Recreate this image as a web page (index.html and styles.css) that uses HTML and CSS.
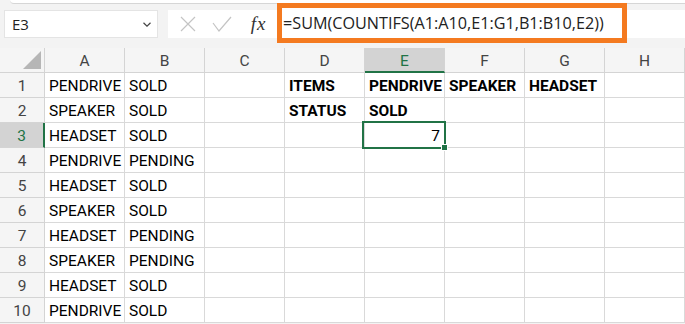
FILE: index.html
```html
<!DOCTYPE html>
<html lang="en">
<head>
  <meta charset="UTF-8" />
  <title>COUNTIFS with SUM</title>
  <link rel="stylesheet" href="styles.css">
</head>
<body>
  <div class="ribbon-edge"></div>
  <div class="formula-row">
    <div class="name-box">
      <span>E3</span>
      <svg class="chev" width="8" height="5" viewBox="0 0 8 5"><path d="M0.5 0.8 L4 4.2 L7.5 0.8" fill="none" stroke="#444" stroke-width="1.2"/></svg>
    </div>
    <div class="formula-bar">
      <span class="fb-btn slot-x">
        <svg width="16" height="16" viewBox="0 0 16 16"><path d="M1 1 L15 15 M15 1 L1 15" stroke="#c4c4c4" stroke-width="1.2" fill="none"/></svg>
      </span>
      <span class="fb-btn slot-ok">
        <svg width="20" height="16" viewBox="0 0 20 16"><path d="M1 7 L7 15 L19 1" stroke="#c4c4c4" stroke-width="1.2" fill="none"/></svg>
      </span>
      <span class="fb-btn slot-fx"><i class="fx">fx</i></span>
      <div class="formula-input">=SUM(COUNTIFS(A1:A10,E1:G1,B1:B10,E2))</div>
    </div>
  </div>

  <div class="sheet">
    <!-- column headers -->
    <div class="cell hdr corner"><div class="tri"></div></div>
    <div class="cell hdr">A</div>
    <div class="cell hdr">B</div>
    <div class="cell hdr">C</div>
    <div class="cell hdr">D</div>
    <div class="cell hdr sel-col">E</div>
    <div class="cell hdr">F</div>
    <div class="cell hdr">G</div>
    <div class="cell hdr">H</div>

    <div class="cell rowhdr">1</div>
    <div class="cell">PENDRIVE</div><div class="cell">SOLD</div><div class="cell"></div>
    <div class="cell bold">ITEMS</div><div class="cell bold">PENDRIVE</div><div class="cell bold">SPEAKER</div><div class="cell bold">HEADSET</div><div class="cell"></div>

    <div class="cell rowhdr">2</div>
    <div class="cell">SPEAKER</div><div class="cell">SOLD</div><div class="cell"></div>
    <div class="cell bold">STATUS</div><div class="cell bold">SOLD</div><div class="cell"></div><div class="cell"></div><div class="cell"></div>

    <div class="cell rowhdr sel-row">3</div>
    <div class="cell">HEADSET</div><div class="cell">SOLD</div><div class="cell"></div>
    <div class="cell"></div><div class="cell num active">7</div><div class="cell"></div><div class="cell"></div><div class="cell"></div>

    <div class="cell rowhdr">4</div>
    <div class="cell">PENDRIVE</div><div class="cell">PENDING</div><div class="cell"></div>
    <div class="cell"></div><div class="cell"></div><div class="cell"></div><div class="cell"></div><div class="cell"></div>

    <div class="cell rowhdr">5</div>
    <div class="cell">HEADSET</div><div class="cell">SOLD</div><div class="cell"></div>
    <div class="cell"></div><div class="cell"></div><div class="cell"></div><div class="cell"></div><div class="cell"></div>

    <div class="cell rowhdr">6</div>
    <div class="cell">SPEAKER</div><div class="cell">SOLD</div><div class="cell"></div>
    <div class="cell"></div><div class="cell"></div><div class="cell"></div><div class="cell"></div><div class="cell"></div>

    <div class="cell rowhdr">7</div>
    <div class="cell">HEADSET</div><div class="cell">PENDING</div><div class="cell"></div>
    <div class="cell"></div><div class="cell"></div><div class="cell"></div><div class="cell"></div><div class="cell"></div>

    <div class="cell rowhdr">8</div>
    <div class="cell">SPEAKER</div><div class="cell">PENDING</div><div class="cell"></div>
    <div class="cell"></div><div class="cell"></div><div class="cell"></div><div class="cell"></div><div class="cell"></div>

    <div class="cell rowhdr">9</div>
    <div class="cell">HEADSET</div><div class="cell">SOLD</div><div class="cell"></div>
    <div class="cell"></div><div class="cell"></div><div class="cell"></div><div class="cell"></div><div class="cell"></div>

    <div class="cell rowhdr">10</div>
    <div class="cell">PENDRIVE</div><div class="cell">SOLD</div><div class="cell"></div>
    <div class="cell"></div><div class="cell"></div><div class="cell"></div><div class="cell"></div><div class="cell"></div>
  </div>
</body>
</html>
```

FILE: styles.css
```css
html, body {
  margin: 0;
  height: 100%;
  overflow: hidden;
}
body {
  background: #f3f3f3;
  font-family: Roboto, "Liberation Sans", sans-serif;
  color: #000;
}

/* top strip of the ribbon */
.ribbon-edge {
  height: 3px;
  margin-left: 10px;
  background: #fff;
  border-bottom: 1px solid #d6d6d6;
  border-bottom-left-radius: 6px;
}

.formula-row {
  height: 44px;
  box-sizing: border-box;
  padding-top: 6px;
  display: flex;
  align-items: flex-start;
}
.name-box {
  margin-left: 4px;
  width: 154px;
  height: 28px;
  box-sizing: border-box;
  background: #fff;
  border: 1px solid #e4e4e4;
  display: flex;
  align-items: center;
  justify-content: space-between;
  padding: 0 6px 0 7px;
  font-family: "Open Sans", "Noto Sans", sans-serif;
  font-size: 15px;
  color: #222;
}
.name-box .chev {
  margin-top: 1px;
}
.formula-bar {
  margin-left: 10px;
  flex: 1;
  height: 28px;
  background: #fff;
  display: flex;
  align-items: center;
  padding-left: 4px;
}
.fb-btn {
  display: flex;
  align-items: center;
  justify-content: center;
  height: 28px;
}
.slot-x { width: 32px; }
.slot-ok { width: 36px; }
.slot-fx { width: 37px; }
.fx {
  font-family: "Liberation Serif", serif;
  font-size: 19px;
  color: #333;
  letter-spacing: 1px;
}
.formula-input {
  align-self: flex-start;
  margin-top: -7px;
  width: 350px;
  height: 40px;
  box-sizing: border-box;
  border: 5px solid #f47a20;
  background: #fff;
  padding-left: 1px;
  font-family: "Open Sans", "Noto Sans", sans-serif;
  font-size: 16.2px;
  line-height: 30px;
  color: #222;
  white-space: nowrap;
  overflow: hidden;
}

/* worksheet grid */
.sheet {
  display: grid;
  grid-template-columns: 45px repeat(8, 80px);
  grid-auto-rows: 25px;
  background: #fff;
}
.cell {
  box-sizing: border-box;
  border-right: 1px solid #d9d9d9;
  border-bottom: 1px solid #d9d9d9;
  padding: 0 4px;
  font-size: 15.5px;
  line-height: 26px;
  white-space: nowrap;
  overflow: hidden;
}
.bold {
  font-weight: bold;
}
.num {
  text-align: right;
}
.hdr, .rowhdr {
  background: #f5f5f5;
  color: #444;
  text-align: center;
  padding: 0;
  border-color: #d4d4d4;
}
.corner {
  display: flex;
  justify-content: flex-end;
  align-items: flex-end;
  padding: 0 3px 3px 0;
}
.tri {
  width: 18px;
  height: 18px;
  background: #b6b6b6;
  clip-path: polygon(100% 0, 100% 100%, 0 100%);
}
.sel-col {
  background: #d3d3d3;
  color: #217346;
  border-bottom: 2px solid #217346;
}
.sel-row {
  background: #d3d3d3;
  color: #217346;
  border-right: 2px solid #217346;
}

/* active cell frame and fill handle */
.active {
  position: relative;
  overflow: visible;
}
.active::before {
  content: "";
  position: absolute;
  left: -3px;
  top: -2px;
  right: -2px;
  bottom: -2px;
  border: 2px solid #217346;
  z-index: 2;
}
.active::after {
  content: "";
  position: absolute;
  right: -4px;
  bottom: -4px;
  width: 5px;
  height: 5px;
  background: #217346;
  border: 1px solid #fff;
  z-index: 3;
}
```
